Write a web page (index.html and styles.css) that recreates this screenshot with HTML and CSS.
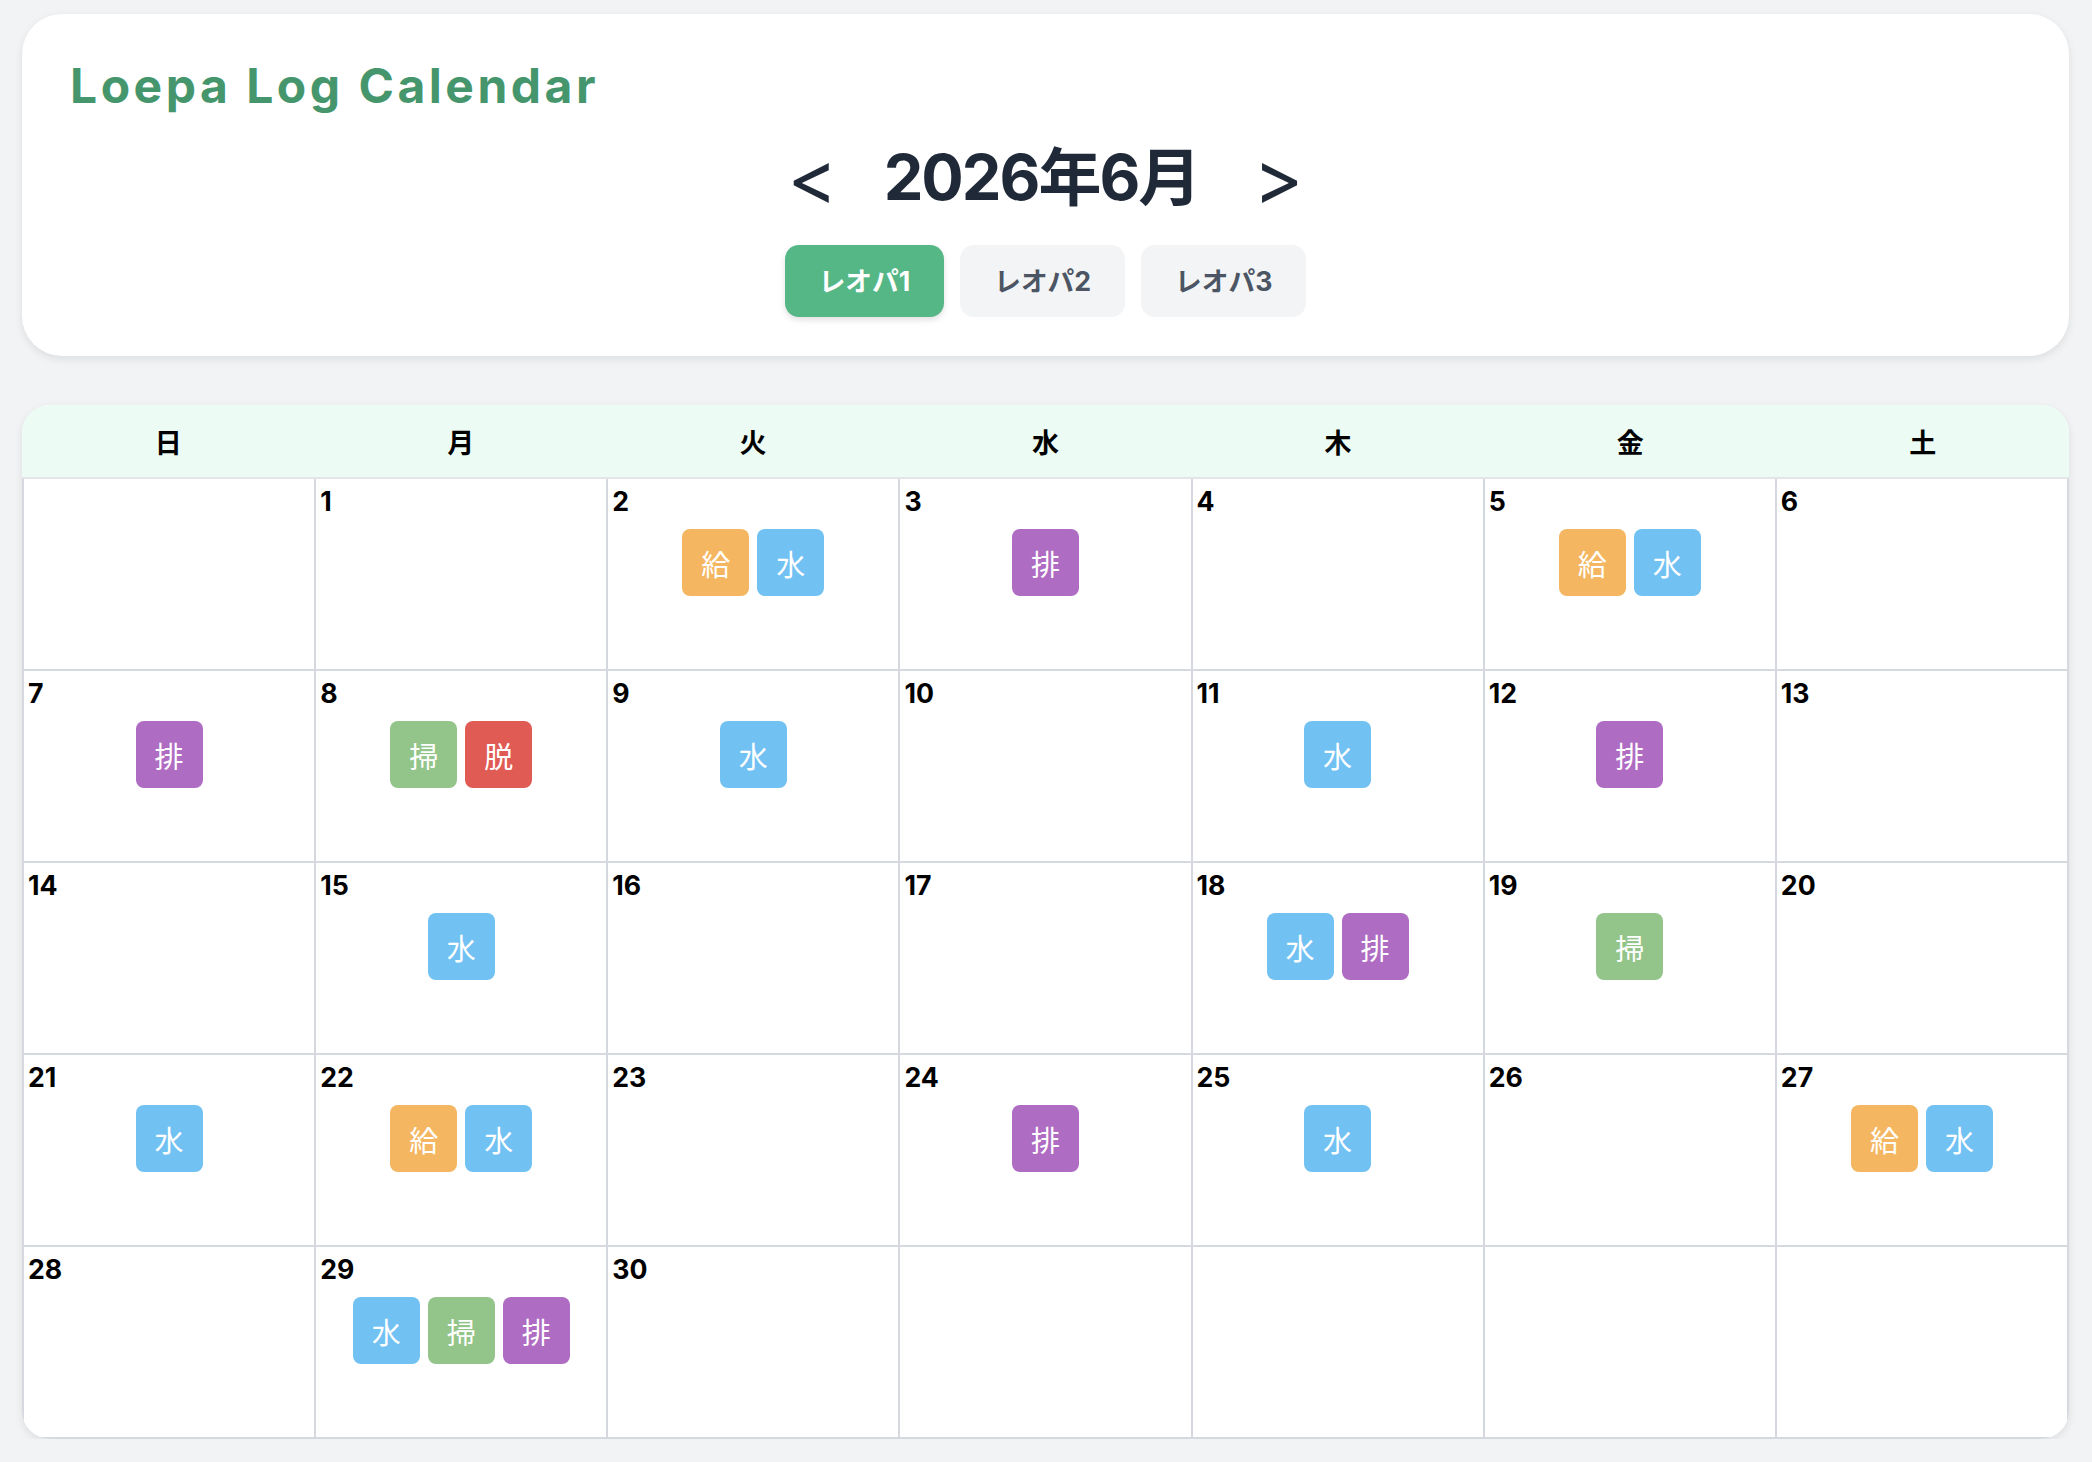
FILE: index.html
```html
<!DOCTYPE html>
<html lang="ja">
<head>
<meta charset="utf-8">
<title>Loepa Log Calendar</title>
<link rel="stylesheet" href="styles.css">
</head>
<body>
<div class="page">
  <header class="top-card">
    <h1 class="app-title">Loepa Log Calendar</h1>
    <div class="month-nav">
      <button class="nav-arrow nav-arrow--prev" type="button">&lt;</button>
      <h2 class="month-label">2026年6月</h2>
      <button class="nav-arrow nav-arrow--next" type="button">&gt;</button>
    </div>
    <div class="pet-tabs">
      <button class="pet-tab is-active" type="button">レオパ1</button>
      <button class="pet-tab" type="button">レオパ2</button>
      <button class="pet-tab" type="button">レオパ3</button>
    </div>
  </header>

  <section class="calendar">
    <div class="weekdays">
      <div class="weekday">日</div>
      <div class="weekday">月</div>
      <div class="weekday">火</div>
      <div class="weekday">水</div>
      <div class="weekday">木</div>
      <div class="weekday">金</div>
      <div class="weekday">土</div>
    </div>
    <div class="days">
      <div class="day is-empty"></div>
      <div class="day"><span class="day-num">1</span></div>
      <div class="day"><span class="day-num">2</span><div class="badges"><span class="badge badge--feed">給</span><span class="badge badge--water">水</span></div></div>
      <div class="day"><span class="day-num">3</span><div class="badges"><span class="badge badge--poop">排</span></div></div>
      <div class="day"><span class="day-num">4</span></div>
      <div class="day"><span class="day-num">5</span><div class="badges"><span class="badge badge--feed">給</span><span class="badge badge--water">水</span></div></div>
      <div class="day"><span class="day-num">6</span></div>

      <div class="day"><span class="day-num">7</span><div class="badges"><span class="badge badge--poop">排</span></div></div>
      <div class="day"><span class="day-num">8</span><div class="badges"><span class="badge badge--clean">掃</span><span class="badge badge--shed">脱</span></div></div>
      <div class="day"><span class="day-num">9</span><div class="badges"><span class="badge badge--water">水</span></div></div>
      <div class="day"><span class="day-num">10</span></div>
      <div class="day"><span class="day-num">11</span><div class="badges"><span class="badge badge--water">水</span></div></div>
      <div class="day"><span class="day-num">12</span><div class="badges"><span class="badge badge--poop">排</span></div></div>
      <div class="day"><span class="day-num">13</span></div>

      <div class="day"><span class="day-num">14</span></div>
      <div class="day"><span class="day-num">15</span><div class="badges"><span class="badge badge--water">水</span></div></div>
      <div class="day"><span class="day-num">16</span></div>
      <div class="day"><span class="day-num">17</span></div>
      <div class="day"><span class="day-num">18</span><div class="badges"><span class="badge badge--water">水</span><span class="badge badge--poop">排</span></div></div>
      <div class="day"><span class="day-num">19</span><div class="badges"><span class="badge badge--clean">掃</span></div></div>
      <div class="day"><span class="day-num">20</span></div>

      <div class="day"><span class="day-num">21</span><div class="badges"><span class="badge badge--water">水</span></div></div>
      <div class="day"><span class="day-num">22</span><div class="badges"><span class="badge badge--feed">給</span><span class="badge badge--water">水</span></div></div>
      <div class="day"><span class="day-num">23</span></div>
      <div class="day"><span class="day-num">24</span><div class="badges"><span class="badge badge--poop">排</span></div></div>
      <div class="day"><span class="day-num">25</span><div class="badges"><span class="badge badge--water">水</span></div></div>
      <div class="day"><span class="day-num">26</span></div>
      <div class="day"><span class="day-num">27</span><div class="badges"><span class="badge badge--feed">給</span><span class="badge badge--water">水</span></div></div>

      <div class="day"><span class="day-num">28</span></div>
      <div class="day"><span class="day-num">29</span><div class="badges"><span class="badge badge--water">水</span><span class="badge badge--clean">掃</span><span class="badge badge--poop">排</span></div></div>
      <div class="day"><span class="day-num">30</span></div>
      <div class="day is-empty"></div>
      <div class="day is-empty"></div>
      <div class="day is-empty"></div>
      <div class="day is-empty"></div>
    </div>
  </section>
</div>
</body>
</html>
```

FILE: styles.css
```css
* {
  box-sizing: border-box;
}

body {
  margin: 0;
  background: #f2f3f5;
  font-family: Inter, "Noto Sans CJK JP", sans-serif;
  color: #000;
}

.page {
  padding: 14px 23px 0 22px;
  display: flex;
  flex-direction: column;
  gap: 49px;
}

/* ---- header card ---- */
.top-card {
  background: #fff;
  border-radius: 40px;
  box-shadow: 0 3px 8px rgba(0, 0, 0, 0.09);
  padding: 40px 48px 39px;
  display: flex;
  flex-direction: column;
}

.app-title {
  margin: 0;
  font-size: 48px;
  line-height: 64px;
  font-weight: 700;
  letter-spacing: 3.5px;
  color: #46966d;
}

.month-nav {
  margin-top: 17px;
  display: flex;
  justify-content: center;
  align-items: center;
}

.nav-arrow {
  border: 0;
  background: none;
  font-family: Inter, sans-serif;
  font-size: 76px;
  line-height: 85px;
  font-weight: 400;
  color: #1f2937;
}

.nav-arrow--prev {
  padding: 0 46px 0 0;
}

.nav-arrow--next {
  padding: 0 0 0 54px;
}

.month-label {
  margin: 0;
  font-size: 63px;
  line-height: 85px;
  font-weight: 700;
  letter-spacing: -2px;
  color: #1f2937;
}

.pet-tabs {
  margin-top: 25px;
  display: flex;
  justify-content: center;
  gap: 16px;
}

.pet-tab {
  border: 0;
  border-radius: 14px;
  padding: 16px 34px;
  font-family: Inter, "Noto Sans CJK JP", sans-serif;
  font-size: 26.7px;
  line-height: 40px;
  font-weight: 700;
  background: #f3f4f6;
  color: #4b5563;
}

.pet-tab.is-active {
  background: #55b786;
  color: #fff;
  box-shadow: 0 3px 6px rgba(0, 0, 0, 0.12);
}

/* ---- calendar ---- */
.calendar {
  background: #fff;
  border-radius: 28px;
  overflow: hidden;
  box-shadow: 0 3px 8px rgba(0, 0, 0, 0.09);
}

.weekdays {
  display: grid;
  grid-template-columns: repeat(7, 1fr);
  background: #ecfcf4;
  border-bottom: 2px solid #e3e5e9;
}

.weekday {
  height: 72px;
  display: flex;
  align-items: center;
  justify-content: center;
  font-size: 27px;
  font-weight: 700;
}

.days {
  display: grid;
  grid-template-columns: repeat(7, 1fr);
  grid-auto-rows: 190px;
  gap: 2px;
  padding: 0 2px 2px;
  background: #d5d8de;
}

.day {
  background: #fff;
  padding: 4px 4px;
  display: flex;
  flex-direction: column;
}

.day-num {
  font-size: 26.7px;
  line-height: 37px;
  font-weight: 700;
}

.badges {
  margin-top: 9px;
  display: flex;
  justify-content: center;
  gap: 8px;
}

.badge {
  width: 67px;
  height: 67px;
  border-radius: 8px;
  display: flex;
  align-items: center;
  justify-content: center;
  color: #fff;
  font-family: "Noto Sans CJK JP", sans-serif;
  font-size: 29px;
  font-weight: 400;
}

.badge--feed { background: #f4b660; }
.badge--water { background: #71c1f3; }
.badge--poop { background: #af6cc3; }
.badge--clean { background: #93c58a; }
.badge--shed { background: #e05b54; }
```
